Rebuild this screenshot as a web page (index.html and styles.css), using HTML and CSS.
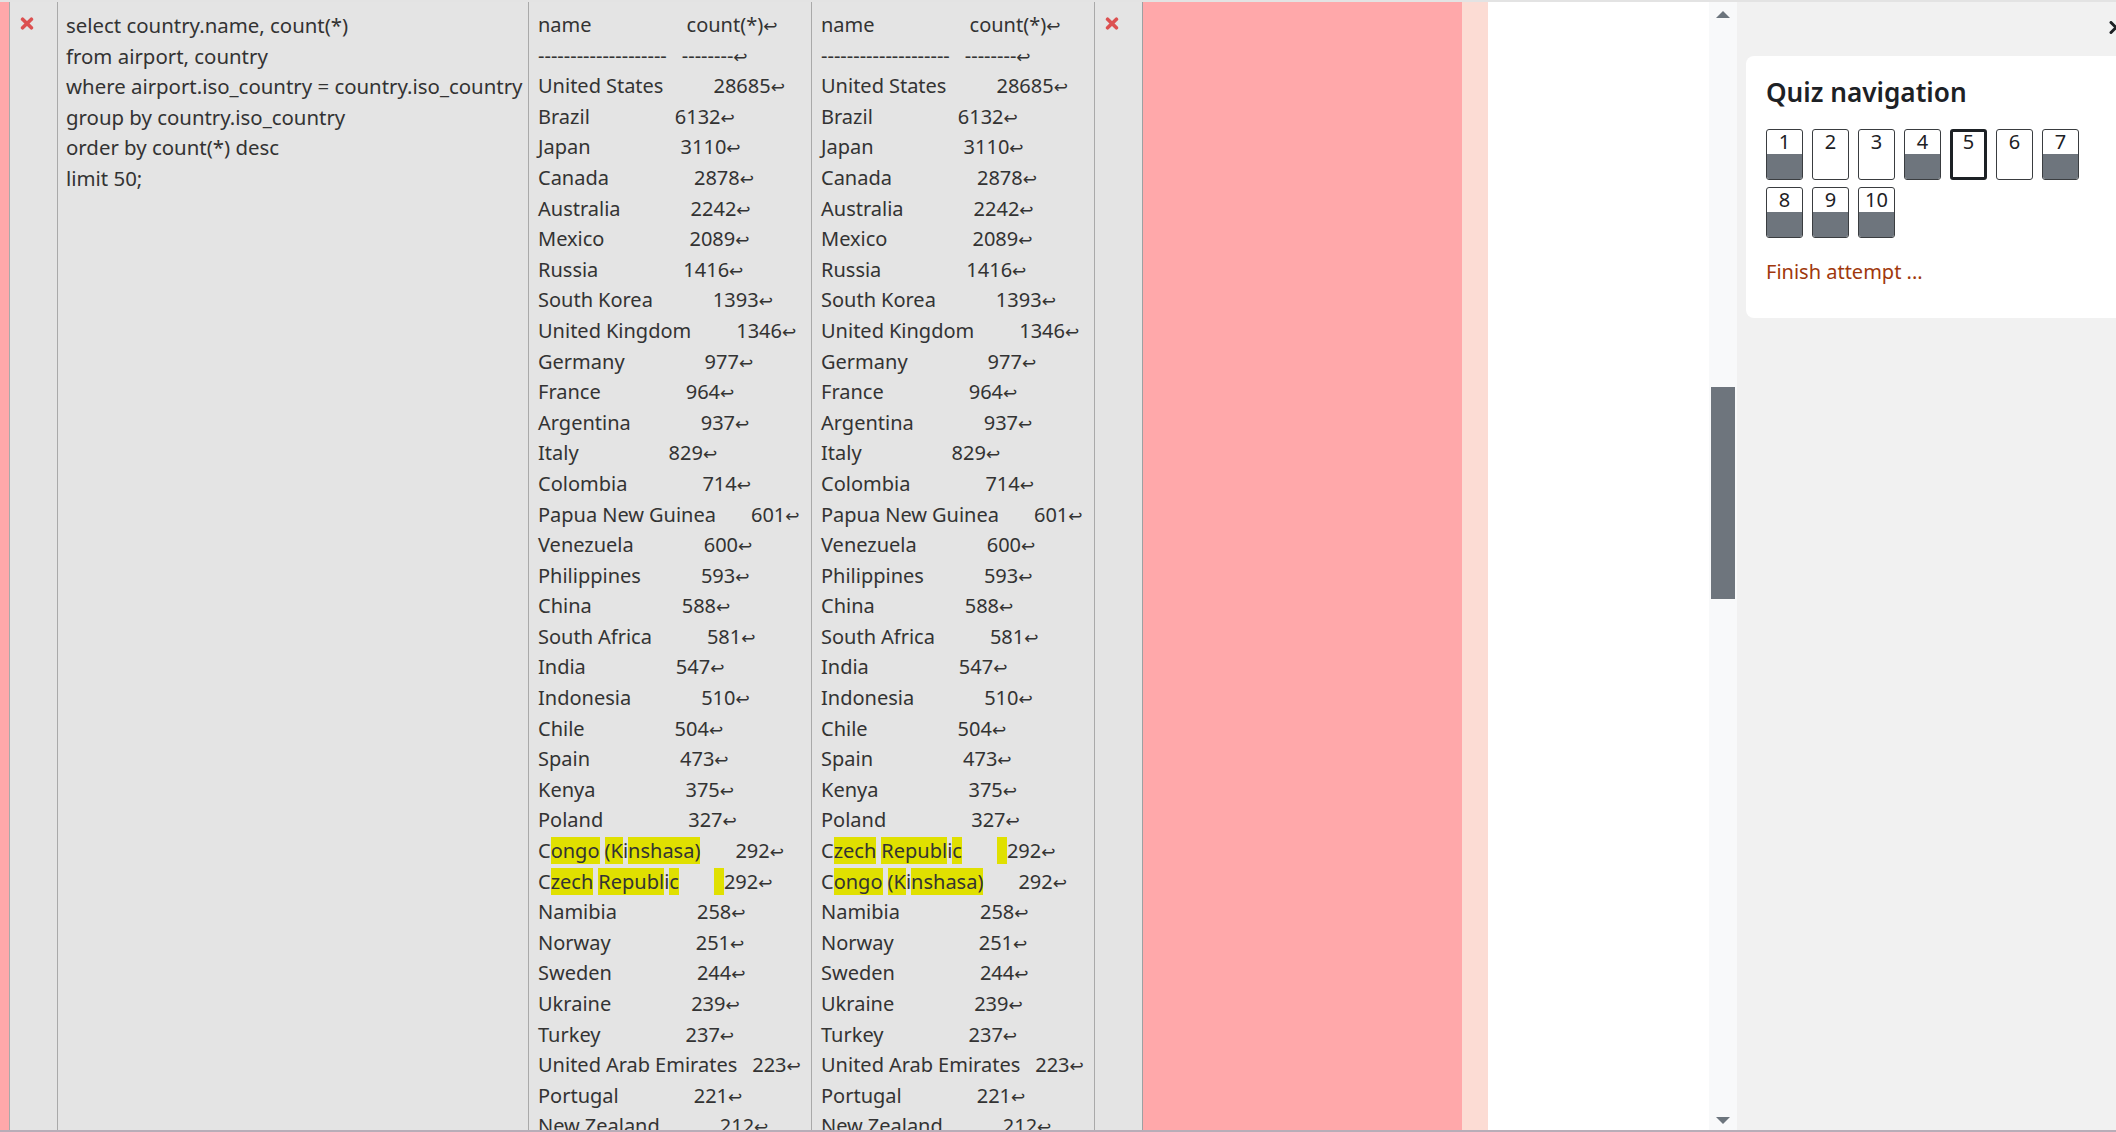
FILE: index.html
```html
<!DOCTYPE html>
<html lang="en">
<head>
<meta charset="utf-8">
<title>Quiz</title>
<link rel="stylesheet" href="styles.css">
</head>
<body>
<div class="page">
  <main class="main">
    <div class="result">
      <div class="stripe"></div>
      <div class="cell icon-cell"><svg class="xicon" viewBox="0 0 14 13" width="14" height="13"><path d="M2.6 2.2 L11.4 10.8 M11.4 2.2 L2.6 10.8" stroke="#dc5050" stroke-width="3.6" stroke-linecap="round"/></svg></div>
      <div class="cell sql">select country.name, count(*)
from airport, country
where airport.iso_country = country.iso_country
group by country.iso_country
order by count(*) desc
limit 50;</div>
      <div class="cell out">name                   count(*)<span class="nl">↩</span>
--------------------   --------<span class="nl">↩</span>
United States          28685<span class="nl">↩</span>
Brazil                 6132<span class="nl">↩</span>
Japan                  3110<span class="nl">↩</span>
Canada                 2878<span class="nl">↩</span>
Australia              2242<span class="nl">↩</span>
Mexico                 2089<span class="nl">↩</span>
Russia                 1416<span class="nl">↩</span>
South Korea            1393<span class="nl">↩</span>
United Kingdom         1346<span class="nl">↩</span>
Germany                977<span class="nl">↩</span>
France                 964<span class="nl">↩</span>
Argentina              937<span class="nl">↩</span>
Italy                  829<span class="nl">↩</span>
Colombia               714<span class="nl">↩</span>
Papua New Guinea       601<span class="nl">↩</span>
Venezuela              600<span class="nl">↩</span>
Philippines            593<span class="nl">↩</span>
China                  588<span class="nl">↩</span>
South Africa           581<span class="nl">↩</span>
India                  547<span class="nl">↩</span>
Indonesia              510<span class="nl">↩</span>
Chile                  504<span class="nl">↩</span>
Spain                  473<span class="nl">↩</span>
Kenya                  375<span class="nl">↩</span>
Poland                 327<span class="nl">↩</span>
C<span class="hl">ongo</span> <span class="hl">(K</span>i<span class="hl">nshasa)</span>       292<span class="nl">↩</span>
C<span class="hl">zech</span> <span class="hl">Republ</span>i<span class="hl">c</span>       <span class="hl">  </span>292<span class="nl">↩</span>
Namibia                258<span class="nl">↩</span>
Norway                 251<span class="nl">↩</span>
Sweden                 244<span class="nl">↩</span>
Ukraine                239<span class="nl">↩</span>
Turkey                 237<span class="nl">↩</span>
United Arab Emirates   223<span class="nl">↩</span>
Portugal               221<span class="nl">↩</span>
New Zealand            212<span class="nl">↩</span></div>
      <div class="cell out">name                   count(*)<span class="nl">↩</span>
--------------------   --------<span class="nl">↩</span>
United States          28685<span class="nl">↩</span>
Brazil                 6132<span class="nl">↩</span>
Japan                  3110<span class="nl">↩</span>
Canada                 2878<span class="nl">↩</span>
Australia              2242<span class="nl">↩</span>
Mexico                 2089<span class="nl">↩</span>
Russia                 1416<span class="nl">↩</span>
South Korea            1393<span class="nl">↩</span>
United Kingdom         1346<span class="nl">↩</span>
Germany                977<span class="nl">↩</span>
France                 964<span class="nl">↩</span>
Argentina              937<span class="nl">↩</span>
Italy                  829<span class="nl">↩</span>
Colombia               714<span class="nl">↩</span>
Papua New Guinea       601<span class="nl">↩</span>
Venezuela              600<span class="nl">↩</span>
Philippines            593<span class="nl">↩</span>
China                  588<span class="nl">↩</span>
South Africa           581<span class="nl">↩</span>
India                  547<span class="nl">↩</span>
Indonesia              510<span class="nl">↩</span>
Chile                  504<span class="nl">↩</span>
Spain                  473<span class="nl">↩</span>
Kenya                  375<span class="nl">↩</span>
Poland                 327<span class="nl">↩</span>
C<span class="hl">zech</span> <span class="hl">Republ</span>i<span class="hl">c</span>       <span class="hl">  </span>292<span class="nl">↩</span>
C<span class="hl">ongo</span> <span class="hl">(K</span>i<span class="hl">nshasa)</span>       292<span class="nl">↩</span>
Namibia                258<span class="nl">↩</span>
Norway                 251<span class="nl">↩</span>
Sweden                 244<span class="nl">↩</span>
Ukraine                239<span class="nl">↩</span>
Turkey                 237<span class="nl">↩</span>
United Arab Emirates   223<span class="nl">↩</span>
Portugal               221<span class="nl">↩</span>
New Zealand            212<span class="nl">↩</span></div>
      <div class="cell icon-cell last"><svg class="xicon" viewBox="0 0 14 13" width="14" height="13"><path d="M2.6 2.2 L11.4 10.8 M11.4 2.2 L2.6 10.8" stroke="#dc5050" stroke-width="3.6" stroke-linecap="round"/></svg></div>
      <div class="pink"></div>
      <div class="lightpink"></div>
    </div>
  </main>
  <div class="vscroll">
    <svg class="sarrow" width="14" height="7" viewBox="0 0 14 7"><path d="M0 7 L7 0 L14 7 Z" fill="#6c757d"/></svg>
    <div class="thumb"></div>
    <div class="spacer"></div>
    <svg class="sarrow" width="14" height="7" viewBox="0 0 14 7"><path d="M0 0 L14 0 L7 7 Z" fill="#6c757d"/></svg>
  </div>
  <aside class="drawer">
    <div class="drawer-head">
      <svg class="close" width="16" height="13" viewBox="0 0 16 13"><path d="M3 1.5 L13 11.5 M13 1.5 L3 11.5" stroke="#1d2125" stroke-width="3" stroke-linecap="round"/></svg>
    </div>
    <section class="card">
      <h3 class="card-title">Quiz navigation</h3>
      <div class="qnav">
        <div class="qbtn answered"><span class="num">1</span><span class="fill"></span></div>
        <div class="qbtn"><span class="num">2</span><span class="fill"></span></div>
        <div class="qbtn"><span class="num">3</span><span class="fill"></span></div>
        <div class="qbtn answered"><span class="num">4</span><span class="fill"></span></div>
        <div class="qbtn current"><span class="num">5</span><span class="fill"></span></div>
        <div class="qbtn"><span class="num">6</span><span class="fill"></span></div>
        <div class="qbtn answered"><span class="num">7</span><span class="fill"></span></div>
        <div class="qbtn answered"><span class="num">8</span><span class="fill"></span></div>
        <div class="qbtn answered"><span class="num">9</span><span class="fill"></span></div>
        <div class="qbtn answered"><span class="num">10</span><span class="fill"></span></div>
      </div>
      <a class="finish" href="#">Finish attempt ...</a>
    </section>
  </aside>
</div>
</body>
</html>
```
FILE: styles.css
```css
* { box-sizing: border-box; }
html, body { margin: 0; padding: 0; }
body {
  width: 2116px;
  height: 1132px;
  overflow: hidden;
  background: #fff;
  font-family: "Noto Sans", "Open Sans", sans-serif;
  color: #1d2125;
}
.page {
  display: flex;
  height: 1132px;
  border-top: 2px solid #e3e3e3;
  border-bottom: 2px solid #b8adb8;
}
.main {
  flex: 0 0 1709px;
  overflow: hidden;
  background: #fff;
}
.result {
  display: flex;
  height: 100%;
}
.stripe { flex: 0 0 9px; background: #ffa8aa; }
.cell {
  background: #e4e4e4;
  border-left: 1px solid #a9a9a9;
}
.icon-cell {
  flex: 0 0 48px;
  padding: 15px 0 0 10px;
}
.icon-cell.last {
  flex-basis: 49px;
  border-right: 1px solid #9ea0a2;
}
.xicon { display: block; }
.sql, .out {
  font-size: 20px;
  line-height: 30.6px;
  color: #333;
  white-space: pre;
  overflow: hidden;
}
.sql { flex: 0 0 471px; font-size: 20.4px; padding: 8px 0 0 8px; }
.out { flex: 0 0 283px; word-spacing: -0.2px; padding: 8px 0 0 9px; }
.nl {
  font-family: "DejaVu Sans", sans-serif;
  font-size: 17px;
  line-height: 1;
  color: #333;
}
.hl { background: #e0e000; }
.pink { flex: 0 0 319px; background: #ffa8aa; }
.lightpink { flex: 0 0 26px; background: #fcdcd4; }

.vscroll {
  flex: 0 0 28px;
  background: #f8f9fa;
  display: flex;
  flex-direction: column;
  align-items: center;
  padding: 9px 0 6px;
}
.sarrow { display: block; flex: 0 0 auto; }
.thumb {
  flex: 0 0 212px;
  width: 24px;
  margin-top: 369px;
  background: #6e757d;
}
.spacer { flex: 1; }

.drawer {
  flex: 1;
  background: #f1f1f1;
  overflow: hidden;
  padding-left: 9px;
}
.drawer-head {
  height: 54px;
  display: flex;
  justify-content: flex-end;
  align-items: flex-start;
  padding-top: 19px;
}
.close { display: block; margin-right: -8px; }
.card {
  width: 420px;
  height: 262px;
  background: #fff;
  border-radius: 8px;
  padding: 21px 0 0 20px;
}
.card-title {
  margin: 0;
  font-size: 26.2px;
  line-height: 1.2;
  font-weight: 600;
  color: #1d2125;
}
.qnav {
  display: flex;
  flex-wrap: wrap;
  gap: 7px 9px;
  width: 313px;
  margin-top: 21px;
}
.qbtn {
  width: 37px;
  height: 51px;
  border: 1px solid #3a3d40;
  border-radius: 3px;
  background: #fff;
  display: flex;
  flex-direction: column;
  overflow: hidden;
}
.qbtn .num {
  height: 24px;
  line-height: 24px;
  text-align: center;
  font-size: 20px;
  color: #1d2125;
}
.qbtn .fill { flex: 1; }
.qbtn.answered .fill { background: #6e757d; }
.qbtn.current { border: 3px solid #1d2125; }
.qbtn.current .num { margin-top: -2px; }
.finish {
  display: block;
  margin-top: 19px;
  font-size: 20px;
  line-height: 30px;
  color: #a0380c;
  text-decoration: none;
}
```
